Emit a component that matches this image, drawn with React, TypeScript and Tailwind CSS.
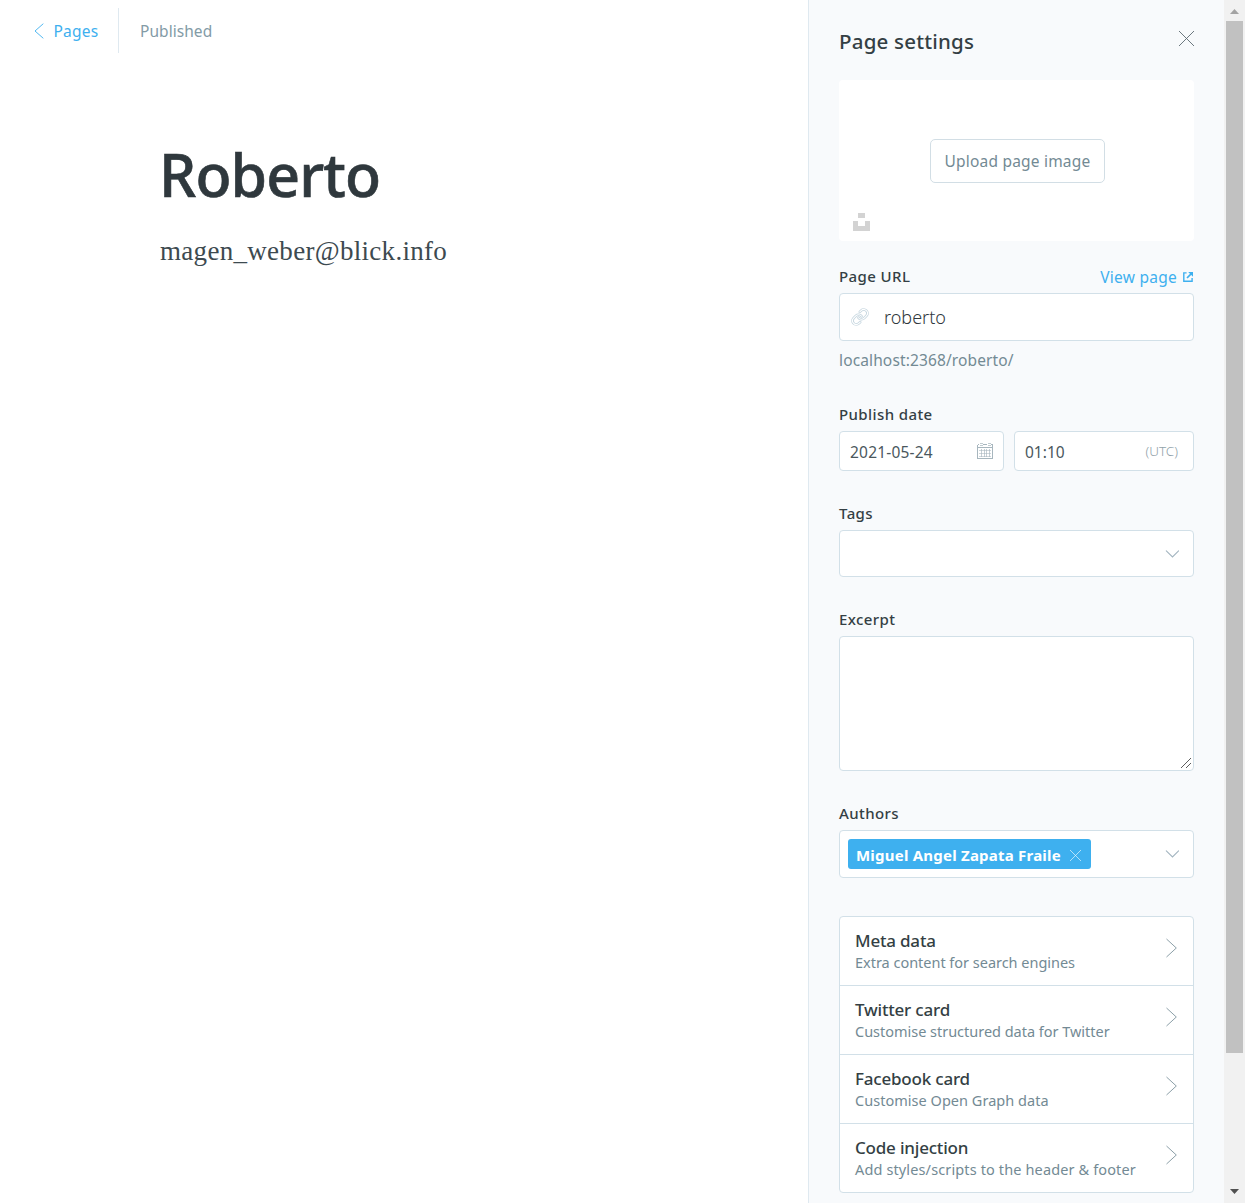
import React from "react";

type TextProps = { children: React.ReactNode };

function ChevronLeft() {
  return (
    <svg width="10" height="16" viewBox="0 0 10 16" fill="none" stroke="#3eb0ef" strokeWidth="0.9">
      <path d="M9.3 0.7 L1 8 L9.3 15.3" />
    </svg>
  );
}

function ChevronRight() {
  return (
    <svg width="12" height="20" viewBox="0 0 12 20" fill="none" stroke="#7f949e" strokeWidth="0.9">
      <path d="M1.5 1 L11.3 10 L1.5 19" />
    </svg>
  );
}

function ChevronDown() {
  return (
    <svg width="14" height="8" viewBox="0 0 14 8" fill="none" stroke="#a3b5c0" strokeWidth="1.1" strokeLinecap="round">
      <path d="M1.3 0.8 L7.5 6.9 L13.6 0.8" />
    </svg>
  );
}

function Cross({ size, color }: { size: number; color: string }) {
  return (
    <svg width={size} height={size} viewBox="0 0 15 15" fill="none" stroke={color} strokeWidth="0.9">
      <path d="M0 0 L15 15 M15 0 L0 15" />
    </svg>
  );
}

function LinkIcon() {
  const upper = "M10 13a5 5 0 0 0 7.54.54l3-3a5 5 0 0 0-7.07-7.07l-1.72 1.71";
  const lower = "M14 11a5 5 0 0 0-7.54-.54l-3 3a5 5 0 0 0 7.07 7.07l1.71-1.71";
  return (
    <svg width="18" height="18" viewBox="0 0 24 24" fill="none" strokeLinecap="round">
      <path d={upper} stroke="#c3d4de" strokeWidth="3.6" />
      <path d={upper} stroke="#ffffff" strokeWidth="1.5" />
      <path d={lower} stroke="#c3d4de" strokeWidth="3.6" />
      <path d={lower} stroke="#ffffff" strokeWidth="1.5" />
    </svg>
  );
}

function CalendarIcon() {
  return (
    <svg width="16" height="16" viewBox="0 0 16 16" fill="none" stroke="#a7b6be" strokeWidth="1" shapeRendering="crispEdges">
      <path d="M0.5 1.5 V15.5 H15.5 V1.5 M0.5 4.5 H15.5" />
      <path d="M0.5 1.5 H2 M6 1.5 H10 M14 1.5 H15.5" />
      <path d="M2 7.5 H14 M2 10.5 H14 M2 13.5 H14" strokeOpacity="0.55" />
      <path d="M4.5 6 V14 M7.5 6 V14 M9.5 6 V14 M12.5 6 V14" strokeOpacity="0.65" />
      <path d="M2.5 0.5 H5.5 M10.5 0.5 H13.5 M2.5 2.5 H5.5 M10.5 2.5 H13.5" strokeOpacity="0.7" />
    </svg>
  );
}

function ExternalIcon() {
  return (
    <svg width="10" height="10" viewBox="0 0 10 10" fill="none" stroke="#3eb0ef" strokeWidth="1.4">
      <path d="M3.6 0.9 H0.8 V9.2 H9.1 V6" />
      <path d="M4 6 L8.6 1.4" strokeWidth="1.7" />
      <path d="M5.2 0 H10 V4.8 Z" fill="#3eb0ef" stroke="none" />
    </svg>
  );
}

function Label({ children }: TextProps) {
  return (
    <div className="h-[17px] text-[15px] leading-[17px] font-medium tracking-[0.4px] text-[#343f44]">{children}</div>
  );
}

const sections = [
  { title: "Meta data", text: "Extra content for search engines", track: "tracking-[-0.02px]" },
  { title: "Twitter card", text: "Customise structured data for Twitter", track: "tracking-[-0.02px]" },
  { title: "Facebook card", text: "Customise Open Graph data", track: "tracking-[0.03px]" },
  { title: "Code injection", text: "Add styles/scripts to the header & footer", track: "tracking-[0.13px]" },
];

export default function App() {
  return (
    <div className="flex h-[1203px] w-[1245px] overflow-hidden bg-white font-['Noto_Sans',sans-serif]">
      <main className="w-[808px] shrink-0">
        <header className="flex h-[53px] items-end">
          <div className="flex h-[45px] w-[119px] items-center border-r border-[#dfe9f0] pl-[33.5px] text-[15.5px] tracking-[0.2px] text-[#3eb0ef]">
            <ChevronLeft />
            <span className="mt-[3px] ml-[10px]">Pages</span>
          </div>
          <div className="flex h-[45px] items-center pt-[3px] pl-[21px] text-[15.5px] tracking-[0.05px] text-[#839ba6]">
            Published
          </div>
        </header>
        <h1 className="mt-[81px] ml-[159px] text-[59px] leading-[80px] font-medium tracking-[-0.9px] text-[#2f383d] [-webkit-text-stroke:0.6px_#2f383d]">
          Roberto
        </h1>
        <p className="mt-[17px] ml-[160px] font-['Liberation_Serif',serif] text-[27px] leading-[40px] tracking-[0.3px] text-[#3d4a50]">
          magen_weber@blick.info
        </p>
      </main>

      <aside className="w-[416px] shrink-0 border-l border-[#dfe9f0] bg-[#f8fafc] px-[30px]">
        <div className="flex h-20 items-start justify-between">
          <h2 className="mt-[28px] text-[20.5px] leading-[27px] font-medium tracking-[0.2px] text-[#343f44]">
            Page settings
          </h2>
          <button className="mt-[31px]">
            <Cross size={15} color="#5b6970" />
          </button>
        </div>

        <div className="relative flex h-[161px] items-center justify-center rounded-[4px] bg-white">
          <button className="ml-[2px] h-11 w-[175px] rounded-[5px] border border-[#d2dee5] pt-[2px] text-[15.5px] tracking-[0.2px] whitespace-nowrap text-[#738a94]">
            Upload page image
          </button>
          <svg className="absolute bottom-[10px] left-[14px]" width="17" height="18" viewBox="0 0 17 18" fill="#d3d3d3">
            <path d="M5 0 H12 V5 H5 Z M0 8 H5 V13 H12 V8 H17 V18 H0 Z" />
          </svg>
        </div>

        <div className="mt-[27px] flex justify-between">
          <Label>Page URL</Label>
          <a className="flex items-center pr-px text-[15.5px] leading-[17px] tracking-[0.25px] text-[#3eb0ef]">
            <span className="relative top-px">View page</span>
            <span className="ml-[6px]">
              <ExternalIcon />
            </span>
          </a>
        </div>
        <div className="mt-2 flex h-12 items-center rounded-[4px] border border-[#d2e0e8] bg-white pl-[11px]">
          <LinkIcon />
          <span className="ml-[15px] text-[18px] leading-[24px] font-light text-[#2f383d]">roberto</span>
        </div>
        <p className="mt-[9px] text-[15.5px] leading-5 tracking-[0.13px] text-[#738a94]">localhost:2368/roberto/</p>

        <div className="mt-9">
          <Label>Publish date</Label>
        </div>
        <div className="mt-2 flex gap-[10px]">
          <div className="flex h-10 w-[165px] items-center justify-between rounded-[4px] border border-[#d2e0e8] bg-white px-[10px] text-[15.5px] tracking-[0.2px] text-[#4a575d]">
            <span className="mt-[3px]">2021-05-24</span>
            <CalendarIcon />
          </div>
          <div className="flex h-10 w-[180px] items-center justify-between rounded-[4px] border border-[#d2e0e8] bg-white pr-[15px] pl-[10px] text-[15.5px] tracking-[0px] text-[#4a575d]">
            <span className="mt-[3px]">01:10</span>
            <span className="mt-px text-[13.5px] font-light text-[#91a2aa]">(UTC)</span>
          </div>
        </div>

        <div className="mt-[34px]">
          <Label>Tags</Label>
        </div>
        <div className="mt-2 flex h-[47px] items-center justify-end rounded-[4px] border border-[#d2e0e8] bg-white pr-[14px]">
          <ChevronDown />
        </div>

        <div className="mt-[34px]">
          <Label>Excerpt</Label>
        </div>
        <div className="mt-2 flex h-[135px] items-end justify-end rounded-[4px] border border-[#d2e0e8] bg-white pr-[2px] pb-[2px]">
          <svg width="10" height="10" viewBox="0 0 10 10" fill="none" stroke="#4a4a4a" strokeWidth="0.9">
            <path d="M0 10 L10 0 M5 10 L10 5" />
          </svg>
        </div>

        <div className="mt-[34px]">
          <Label>Authors</Label>
        </div>
        <div className="mt-2 flex h-12 items-center justify-between rounded-[4px] border border-[#d2e0e8] bg-white pr-[14px] pl-2">
          <div className="flex h-[30px] w-[243px] items-center justify-between rounded-[3px] bg-[#3eb0ef] pr-[10px] pl-2 text-[15px] font-bold tracking-[0.22px] whitespace-nowrap text-white">
            <span className="mt-[3px]">Miguel Angel Zapata Fraile</span>
            <span className="mt-[3px]">
              <Cross size={11} color="#f2fafe" />
            </span>
          </div>
          <ChevronDown />
        </div>

        <ul className="mt-[38px] divide-y divide-[#d2e0e8] rounded-[4px] border border-[#d2e0e8] bg-white">
          {sections.map((s, i) => (
            <li
              key={s.title}
              className={
                "flex items-start justify-between pr-4 pl-[15px] " + (i === sections.length - 1 ? "h-[68px]" : "h-[69px]")
              }
            >
              <div className="pt-[13px] whitespace-nowrap">
                <div className="text-[17px] leading-[22px] font-medium tracking-[-0.2px] text-[#343f44]">{s.title}</div>
                <div className={"text-[14.5px] leading-[20px] text-[#738a94] " + s.track}>{s.text}</div>
              </div>
              <div className="mt-[21px]">
                <ChevronRight />
              </div>
            </li>
          ))}
        </ul>
      </aside>

      <div className="flex w-[21px] shrink-0 flex-col items-center bg-[#f1f1f1]">
        <div className="flex h-[21px] items-center pt-[2px]">
          <svg width="9" height="5" viewBox="0 0 9 5" fill="#a3a3a3">
            <path d="M0 5 L4.5 0 L9 5 Z" />
          </svg>
        </div>
        <div className="h-[1032px] w-[17px] bg-[#c1c1c1]" />
        <div className="mt-auto flex h-[21px] items-center pb-[2px]">
          <svg width="9" height="5" viewBox="0 0 9 5" fill="#505050">
            <path d="M0 0 L4.5 5 L9 0 Z" />
          </svg>
        </div>
      </div>
    </div>
  );
}
